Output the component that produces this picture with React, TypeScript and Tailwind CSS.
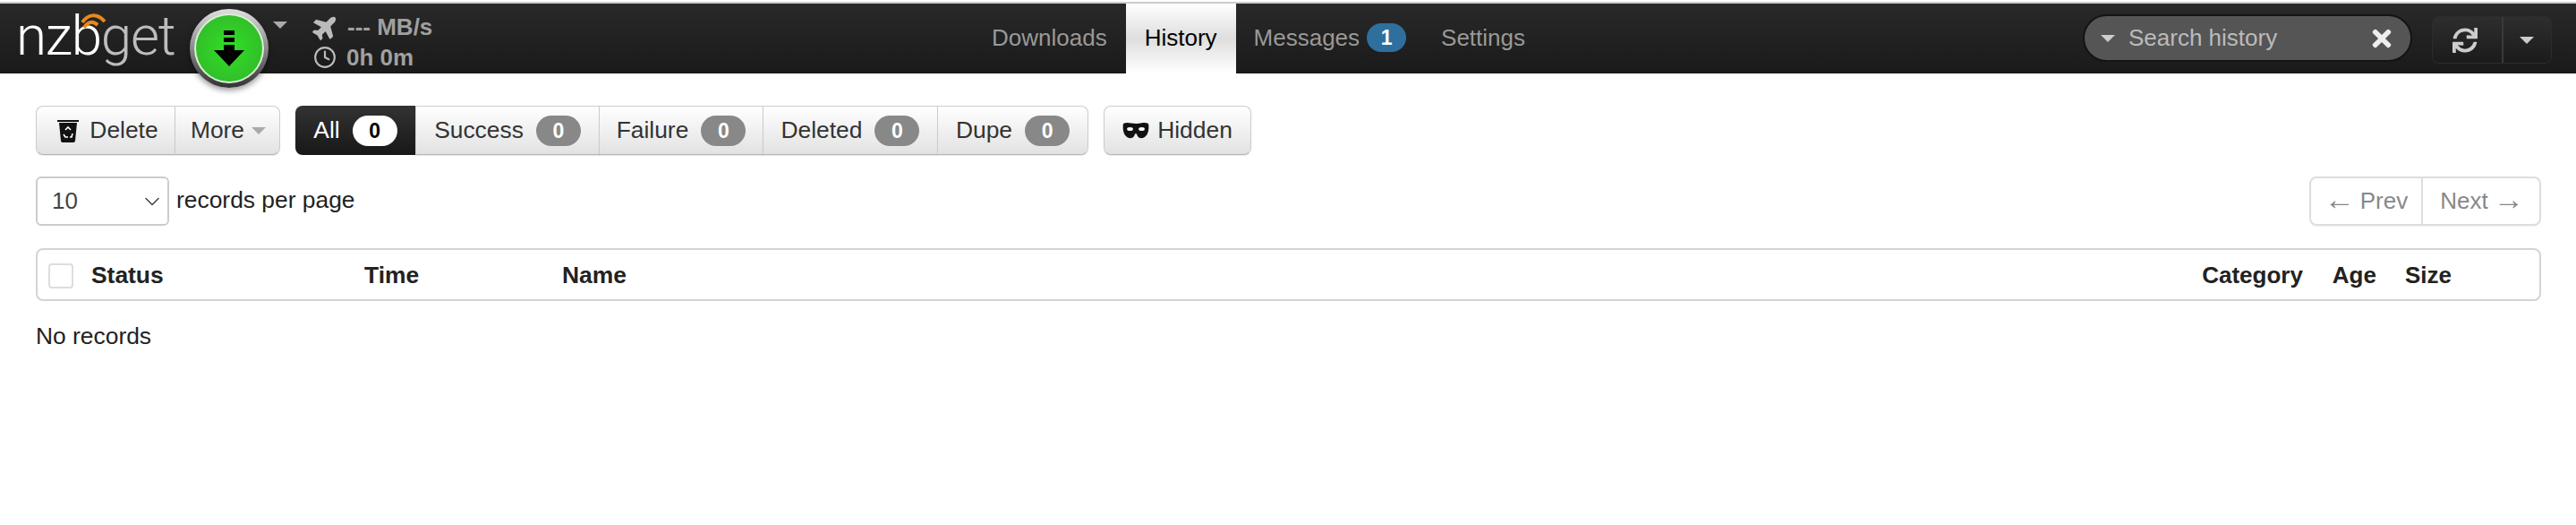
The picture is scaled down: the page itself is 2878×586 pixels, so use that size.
import { ChevronDown, Clock } from "lucide-react";
import { FaPlane, FaSync, FaTimes } from "react-icons/fa";

function Caret({ className }: { className: string }) {
  return <span className={`inline-block h-0 w-0 border-x-[8px] border-t-[8px] border-x-transparent ${className}`} />;
}

function Badge({ n, active }: { n: number; active?: boolean }) {
  return (
    <span
      className={`ml-[14px] flex h-[34px] w-[50px] items-center justify-center rounded-[17px] text-[23px] font-bold ${
        active ? "bg-white text-black" : "bg-[#888] text-white"
      }`}
    >
      {n}
    </span>
  );
}

function BinIcon() {
  return (
    <svg width="26" height="26" viewBox="0 0 26 26" className="mr-[11px]">
      <rect x="1" y="1" width="24" height="2" fill="#111" />
      <path d="M3 4h20l-2 20a2 2 0 0 1-2 2H7a2 2 0 0 1-2-2z" fill="#111" />
      <path d="M10 12l3-3 3 3M8 17l2 3h3M18 16l-1 4h-2" fill="none" stroke="#fff" strokeWidth="1.6" />
    </svg>
  );
}

function MaskIcon() {
  return (
    <svg width="30" height="20" viewBox="0 0 30 20" className="mr-[9px]">
      <path
        d="M1 2c4-2 9 0 14 0s10-2 14 0c1 5 0 11-3 14-3 3-7 3-9 0-1-2-1-3-2-3s-1 1-2 3c-2 3-6 3-9 0C1 13 0 7 1 2z"
        fill="#111"
      />
      <ellipse cx="8.5" cy="8" rx="3.4" ry="2" fill="#fff" />
      <ellipse cx="21.5" cy="8" rx="3.4" ry="2" fill="#fff" />
    </svg>
  );
}

const btn =
  "flex h-[55px] items-center border border-[#ccc] border-b-[#b3b3b3] bg-gradient-to-b from-white to-[#e2e2e2] pt-[1px] text-[26.4px] text-[#333] shadow-[0_1px_1px_rgba(0,0,0,0.08)]";

const filters = [
  { label: "Success", w: "w-[206px]" },
  { label: "Failure", w: "w-[184px]" },
  { label: "Deleted", w: "w-[196px]" },
  { label: "Dupe", w: "w-[169px]" },
];

export default function App() {
  return (
    <div className="min-h-[586px] bg-white font-['Liberation_Sans',Arial,sans-serif] text-[26.4px] text-[#222]">
      <div className="h-[2px] bg-white" />
      <header className="flex h-[80px] items-start border-t-2 border-[#ccc] bg-gradient-to-b from-[#292929] to-[#1a1a1a]">
        <div className="relative ml-[18px] mt-[3px] flex w-[176px] font-['Roboto',sans-serif] text-[62px] leading-[66px] font-light tracking-[-1.3px]">
          <span className="text-white">nzb</span>
          <span className="text-[#bdbdbd]">get</span>
          <svg width="30" height="20" viewBox="0 0 30 20" className="absolute left-[72px] top-[7px]">
            <path d="M2 11C8 2 18 0 27 10M4 17c4-7 10-8 15-3" fill="none" stroke="#e8891c" strokeWidth="4" />
          </svg>
        </div>
        <div className="ml-[18px] mt-[6px] flex h-[88px] w-[88px] shrink-0 items-center justify-center rounded-full bg-gradient-to-b from-[#e0e0e0] via-[#8a8a8a] to-[#333] shadow-[0_3px_6px_rgba(0,0,0,0.4)]">
          <div className="flex h-[78px] w-[78px] items-center justify-center rounded-full border-2 border-white/80 bg-[radial-gradient(circle,#30e024,#33b22c)]">
            <svg width="34" height="40" viewBox="0 0 34 40">
              <path d="M11 0h12v5H11zM11 8h12v5H11zM11 16h12v6h11L17 40 0 22h11z" fill="#000" />
            </svg>
          </div>
        </div>
        <Caret className="ml-[5px] mt-[20px] border-t-[#aaa]" />
        <div className="ml-[28px] mt-[11px] flex w-[140px] flex-col gap-[6px] font-bold text-[#a0a0a0]">
          <div className="flex h-[30px] items-center whitespace-nowrap text-[26px]">
            <FaPlane size={30} className="mr-[9px] -rotate-45 text-[#bbb]" />
            --- MB/s
          </div>
          <div className="flex h-[26px] items-center whitespace-nowrap text-[26px]">
            <Clock size={26} strokeWidth={2} className="ml-[1px] mr-[11px] text-[#bbb]" />
            0h 0m
          </div>
        </div>

        <nav className="ml-[598px] flex h-[78px] items-center text-[26px] text-[#999]">
          <a className="px-[21px] pb-[2px]">Downloads</a>
          <a className="flex h-full items-center bg-gradient-to-b from-white via-[#dedede] to-white px-[21px] pb-[2px] text-black">
            History
          </a>
          <a className="flex items-center pb-[2px] pl-[20px] pr-[18px]">
            Messages
            <span className="ml-[8px] flex h-[32px] w-[44px] items-center justify-center rounded-[16px] bg-[#2e6f9e] text-[23px] font-bold text-white">
              1
            </span>
          </a>
          <a className="px-[21px] pb-[2px]">Settings</a>
        </nav>

        <div className="ml-auto mr-[27px] mt-[12px] flex items-start">
          <div className="flex h-[53px] w-[368px] items-center rounded-full border-2 border-[#141414] bg-[#555] pl-[18px] pr-[17px] text-[26px] text-[#bbb]">
            <Caret className="border-t-[#ccc]" />
            <span className="ml-[15px]">Search history</span>
            <FaTimes size={30} className="ml-auto text-[#eee]" />
          </div>
          <div className="ml-[22px] mt-[2px] flex h-[53px] w-[134px] rounded-[8px] border border-[#2c2c2c] bg-gradient-to-b from-[#2e2e2e] to-[#1b1b1b] text-[#ccc]">
            <span className="flex w-[77px] items-center justify-center pr-[6px]">
              <FaSync size={28} />
            </span>
            <span className="flex flex-1 items-center justify-center border-l-2 border-[#3a3a3a] pr-[2px]">
              <Caret className="border-t-[#ccc]" />
            </span>
          </div>
        </div>
      </header>

      <main className="px-[39px] pt-[36px]">
        <div className="ml-px flex">
          <div className="flex">
            <button className={`${btn} w-[156px] justify-center rounded-l-[8px] pl-[4px]`}>
              <BinIcon />
              Delete
            </button>
            <button className={`${btn} -ml-px w-[118px] justify-center rounded-r-[8px] pl-[2px]`}>
              More
              <Caret className="ml-[8px] border-t-[#aaa]" />
            </button>
          </div>
          <div className="ml-[17px] flex">
            <button className="flex h-[55px] w-[134px] items-center justify-center rounded-l-[8px] bg-gradient-to-b from-[#333] to-[#181818] pt-[1px] text-white">
              All
              <Badge n={0} active />
            </button>
            {filters.map((f, i) => (
              <button
                key={f.label}
                className={`${btn} ${f.w} justify-center ${i ? "-ml-px" : ""} ${
                  i === filters.length - 1 ? "rounded-r-[8px]" : ""
                }`}
              >
                {f.label}
                <Badge n={0} />
              </button>
            ))}
          </div>
          <button className={`${btn} ml-[17px] w-[165px] justify-center rounded-[8px]`}>
            <MaskIcon />
            Hidden
          </button>
        </div>

        <div className="ml-px mt-[24px] flex items-start">
          <div className="relative">
            <select className="h-[55px] w-[149px] appearance-none rounded-[6px] border-2 border-[#ccc] bg-white pl-[16px] text-[26px] text-[#444]">
              <option>10</option>
            </select>
            <ChevronDown size={28} strokeWidth={1.3} className="pointer-events-none absolute right-[5px] top-[14px] text-[#444]" />
          </div>
          <span className="ml-[8px] mt-[7px]">records per page</span>
          <div className="ml-auto flex h-[55px] rounded-[8px] border-2 border-[#ddd] text-[26px] text-[#888] shadow-[0_1px_1px_rgba(0,0,0,0.05)]">
            <span className="flex w-[125px] items-center justify-center border-r-2 border-[#ddd]">
              <span className="mb-[6px] mr-[6px] text-[34px] leading-none font-light">←</span>Prev
            </span>
            <span className="flex w-[130px] items-center justify-center pl-[2px]">
              Next<span className="mb-[6px] ml-[6px] text-[34px] leading-none font-light">→</span>
            </span>
          </div>
        </div>

        <div className="ml-px mt-[25px] flex h-[59px] items-center rounded-[8px] border-2 border-[#d4d4d4] pt-[2px] font-bold">
          <span className="ml-[12px] h-[28px] w-[28px] rounded-[4px] border-2 border-[#ddd]" />
          <span className="ml-[20px] w-[305px]">Status</span>
          <span className="w-[222px]">Time</span>
          <span className="-ml-px">Name</span>
          <span className="ml-auto text-[26px]">Category</span>
          <span className="ml-[33px] text-[26px]">Age</span>
          <span className="ml-[32px] mr-[98px] text-[26px]">Size</span>
        </div>

        <p className="ml-px mt-[20px]">No records</p>
      </main>
    </div>
  );
}
